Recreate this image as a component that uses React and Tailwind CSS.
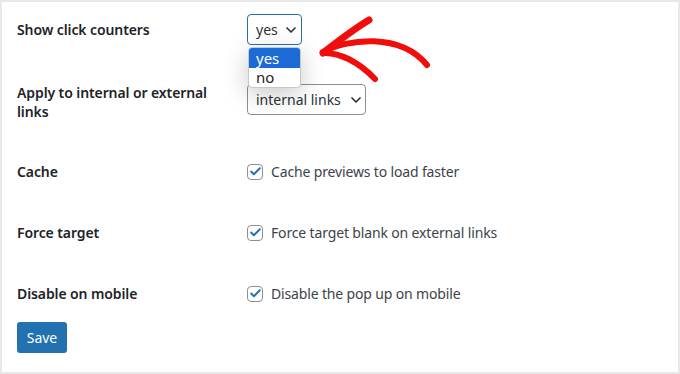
import { Check, ChevronDown } from "lucide-react";

const font = { fontFamily: '"Noto Sans", "Open Sans", sans-serif' };

const CheckRow = ({ label, text, top }) => (
  <div className={`flex items-center h-[19px] ${top}`}>
    <div className="w-[230px] text-[14px] font-semibold text-[#1d2327] tracking-[-0.1px]">{label}</div>
    <label className="flex items-center gap-[8px] text-[14px] text-[#3c434a] tracking-[-0.15px]">
      <span className="w-[16px] h-[16px] border border-[#8c8f94] rounded-[4px] bg-white flex items-center justify-center">
        <Check className="w-[13px] h-[13px] text-[#2271b1]" strokeWidth={3.5} />
      </span>
      {text}
    </label>
  </div>
);

export default function App() {
  return (
    <div className="w-[680px] h-[374px] bg-white border-2 border-[#e8e8e8] relative overflow-hidden" style={font}>
      <div className="pl-[15px]">
        {/* Show click counters */}
        <div className="flex items-center mt-[12px] h-[31px]">
          <div className="w-[230px] text-[14px] font-semibold text-[#1d2327] tracking-[-0.1px]">Show click counters</div>
          <div className="relative">
            <div className="h-[31px] w-[55px] border border-[#2271b1] rounded-[4px] flex items-center pl-[8px] gap-[5px] text-[14px] text-[#2c3338]">
              yes
              <ChevronDown className="w-[16px] h-[16px]" strokeWidth={2.5} />
            </div>
            <div className="absolute left-[1px] top-[33px] w-[53px] bg-white border border-[#c8c8c8] rounded-[4px] shadow-[0_6px_24px_rgba(0,0,0,0.22)] text-[15px] overflow-hidden z-10">
              <div className="h-[20px] leading-[20px] pl-[7px] bg-[#1b6ad6] text-white">yes</div>
              <div className="h-[19px] leading-[19px] pl-[7px] text-[#1d2327]">no</div>
            </div>
          </div>
        </div>

        {/* Apply to */}
        <div className="flex items-start mt-[38px] h-[34px]">
          <div className="w-[230px] pr-[20px] text-[14px] leading-[19px] font-semibold text-[#1d2327] tracking-[-0.1px]">
            Apply to internal or external links
          </div>
          <div className="mt-[1px] h-[31px] w-[119px] border border-[#8c8f94] rounded-[4px] flex items-center pl-[8px] gap-[7px] text-[14px] text-[#2c3338]">
            internal links
            <ChevronDown className="w-[16px] h-[16px]" strokeWidth={2.5} />
          </div>
        </div>

        <CheckRow label="Cache" text="Cache previews to load faster" top="mt-[45px]" />
        <CheckRow label="Force target" text="Force target blank on external links" top="mt-[42px]" />
        <CheckRow label="Disable on mobile" text="Disable the pop up on mobile" top="mt-[42px]" />

        <button className="mt-[19px] h-[31px] w-[50px] bg-[#2271b1] text-white text-[14px] rounded-[3px]">
          Save
        </button>
      </div>

      {/* red arrow */}
      <svg className="absolute left-0 top-0 pointer-events-none" width="680" height="374" viewBox="0 0 680 374">
        <g fill="none" stroke="#f20d0d" strokeLinecap="round" strokeLinejoin="round">
          <path d="M321 50 C345 37 398 30 425 63" strokeWidth="6" />
          <path d="M321 51 C335 40 352 27 367 18" strokeWidth="7" />
          <path d="M321 51 C337 50 357 60 373 77" strokeWidth="6" />
        </g>
      </svg>
    </div>
  );
}
